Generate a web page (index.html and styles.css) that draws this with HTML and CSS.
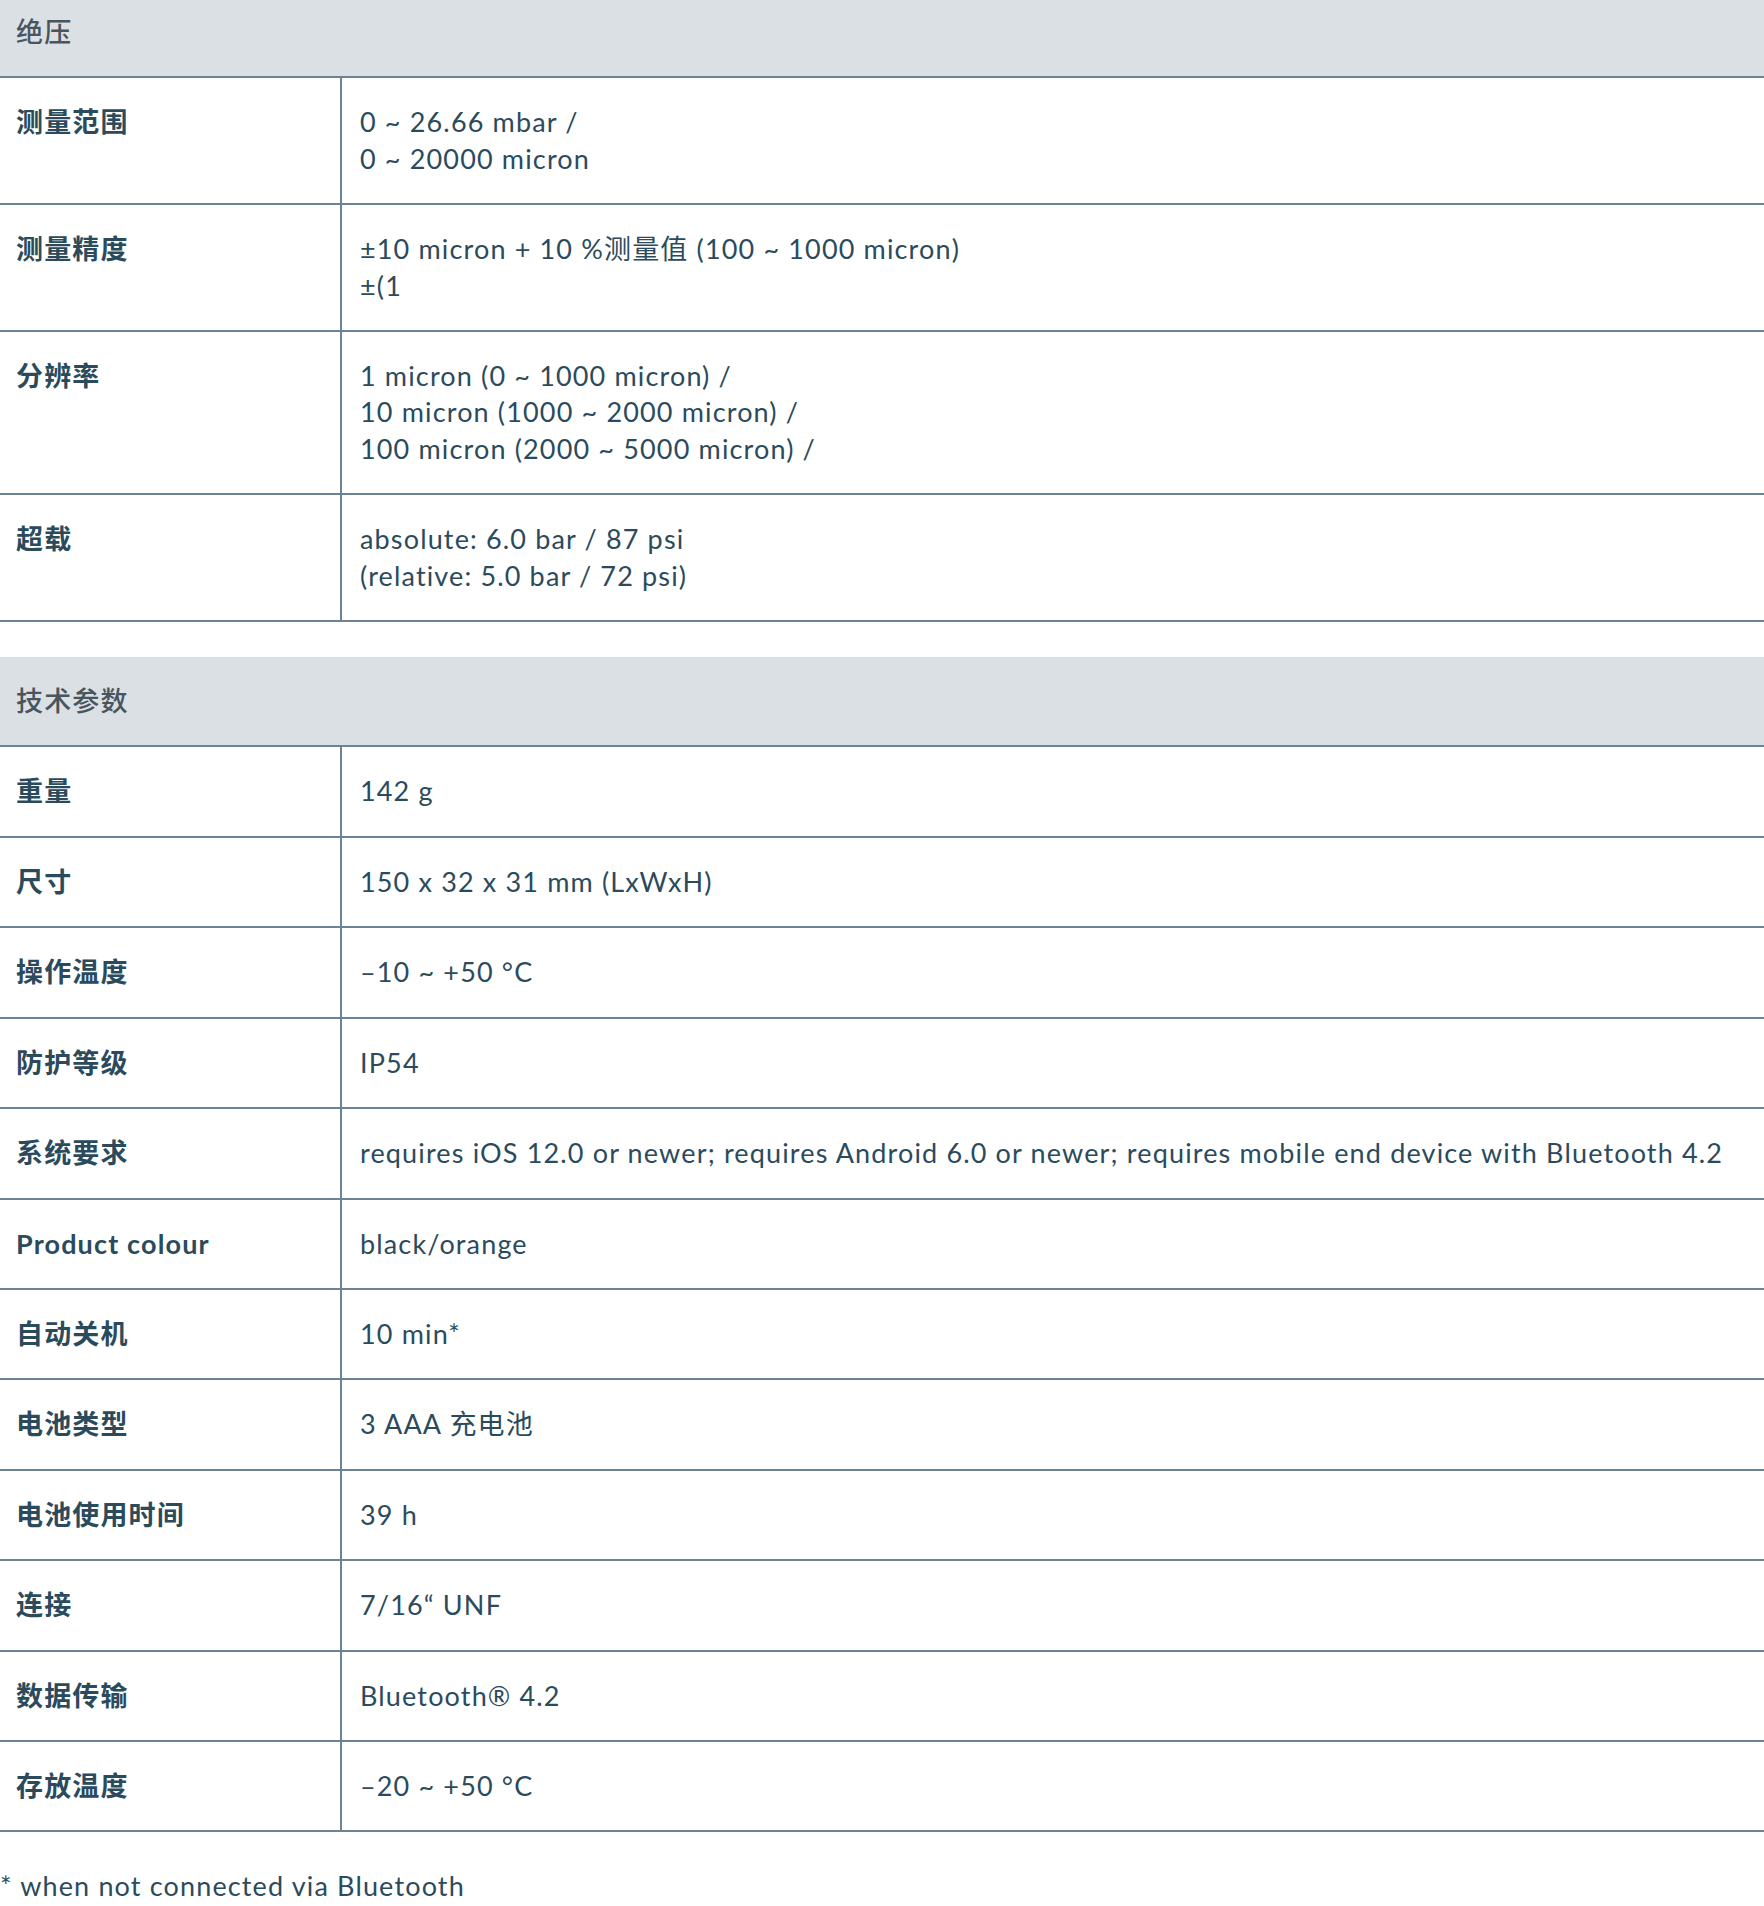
FILE: index.html
```html
<!DOCTYPE html>
<html lang="zh">
<head>
<meta charset="utf-8">
<title>技术参数</title>
<link rel="stylesheet" href="styles.css">
</head>
<body>
<section class="spec first">
  <div class="spec-head">绝压</div>
  <div class="row"><div class="label">测量范围</div><div class="value">0 ~ 26.66 mbar /<br>0 ~ 20000 micron</div></div>
  <div class="row"><div class="label">测量精度</div><div class="value">±10 micron + 10 %测量值 (100 ~ 1000 micron)<br>±(1</div></div>
  <div class="row"><div class="label">分辨率</div><div class="value">1 micron (0 ~ 1000 micron) /<br>10 micron (1000 ~ 2000 micron) /<br>100 micron (2000 ~ 5000 micron) /</div></div>
  <div class="row"><div class="label">超载</div><div class="value">absolute: 6.0 bar / 87 psi<br>(relative: 5.0 bar / 72 psi)</div></div>
</section>
<section class="spec">
  <div class="spec-head">技术参数</div>
  <div class="row"><div class="label">重量</div><div class="value">142 g</div></div>
  <div class="row"><div class="label">尺寸</div><div class="value">150 x 32 x 31 mm (LxWxH)</div></div>
  <div class="row"><div class="label">操作温度</div><div class="value">–10 ~ +50 °C</div></div>
  <div class="row"><div class="label">防护等级</div><div class="value">IP54</div></div>
  <div class="row"><div class="label">系统要求</div><div class="value">requires iOS 12.0 or newer; requires Android 6.0 or newer; requires mobile end device with Bluetooth 4.2</div></div>
  <div class="row"><div class="label">Product colour</div><div class="value">black/orange</div></div>
  <div class="row"><div class="label">自动关机</div><div class="value">10 min*</div></div>
  <div class="row"><div class="label">电池类型</div><div class="value">3 AAA 充电池</div></div>
  <div class="row"><div class="label">电池使用时间</div><div class="value">39 h</div></div>
  <div class="row"><div class="label">连接</div><div class="value">7/16“ UNF</div></div>
  <div class="row"><div class="label">数据传输</div><div class="value">Bluetooth® 4.2</div></div>
  <div class="row"><div class="label">存放温度</div><div class="value">–20 ~ +50 °C</div></div>
</section>
<p class="footnote">* when not connected via Bluetooth</p>
</body>
</html>
```
FILE: styles.css
```css
html, body {
  margin: 0;
  padding: 0;
  background: #ffffff;
}
body {
  font-family: "Lato", "Noto Sans CJK SC", sans-serif;
  font-size: 27px;
  letter-spacing: 1.15px;
  line-height: 36.4px;
  color: #2b4b5d;
}
.spec {
  display: flex;
  flex-direction: column;
}
.spec + .spec {
  margin-top: 35px;
}
.spec-head {
  background: #dae0e3;
  color: #48555e;
  font-weight: 500;
  padding: 26px 16px;
  border-bottom: 2px solid #6b8394;
}
.first .spec-head {
  padding-top: 14px;
}
.row {
  display: grid;
  grid-template-columns: 342px 1fr;
  border-bottom: 2px solid #6b8394;
}
.label {
  font-weight: 700;
  padding: 26px 16px;
  border-right: 2px solid #6b8394;
}
.value {
  padding: 26px 18px;
}
.footnote {
  margin: 36px 0 0;
  padding: 0;
}
```
